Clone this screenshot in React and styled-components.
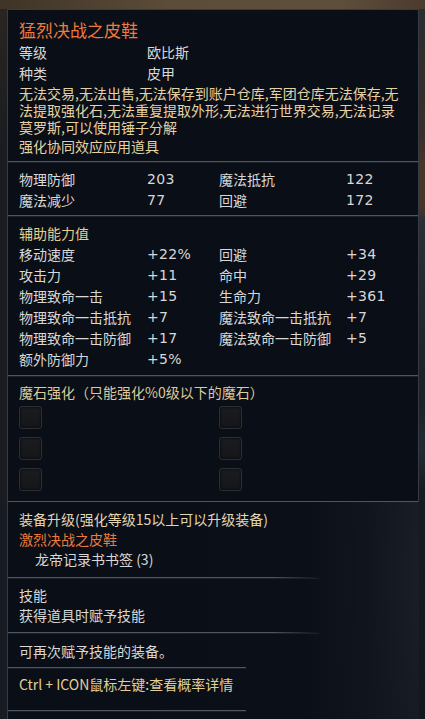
import styled, { createGlobalStyle } from 'styled-components'

const GlobalStyle = createGlobalStyle`
  html, body {
    margin: 0;
    padding: 0;
    background: #12161e;
  }
  body {
    font-family: 'Noto Sans CJK SC', 'Noto Sans', sans-serif;
  }
`

const BASE = [
  ['物理防御', '203', '魔法抵抗', '122'],
  ['魔法减少', '77', '回避', '172'],
]

const EXTRA = [
  ['移动速度', '+22%', '回避', '+34'],
  ['攻击力', '+11', '命中', '+29'],
  ['物理致命一击', '+15', '生命力', '+361'],
  ['物理致命一击抵抗', '+7', '魔法致命一击抵抗', '+7'],
  ['物理致命一击防御', '+17', '魔法致命一击防御', '+5'],
  ['额外防御力', '+5%', '', ''],
]

const Page = styled.div`
  min-height: 100vh;
  display: flex;
  flex-direction: column;
  background:
    radial-gradient(ellipse at 95% 80%, #1a1e26 0%, rgba(18,22,30,0) 45%),
    #12161e;
`

const TopBar = styled.div`
  height: 9px;
  background: linear-gradient(90deg, #3e3427 0%, #5c4c39 40%, #5f4e3b 80%, #4b3b2f 100%);
`

const Stage = styled.div`
  display: flex;
  flex: 1;
`

const LeftGutter = styled.div`
  width: 7px;
  background: linear-gradient(180deg, #2a2520 0%, #1a1c21 20%, #181b22 100%);
`

const RightGutter = styled.div`
  flex: 1;
  background: linear-gradient(180deg,
    #2c2b2e 0%, #3a2e2a 18%, #4a3329 22%, #4a3329 28%,
    #2a2e36 30%, #1b1f27 55%, #242a34 62%, #161a22 68%, #12161e 100%);
`

const Tooltip = styled.div`
  width: 412px;
  display: flex;
  flex-direction: column;
  color: #d8d8d8;
  font-size: 14px;
`

const Upper = styled.div`
  background: #0a0e17;
  border: 1px solid #363c46;
  border-bottom: none;
`

const Lower = styled.div`
  border-left: 1px solid #363c46;
  display: flex;
  flex-direction: column;
  flex: 1;
  background: linear-gradient(90deg, #0a0e17 0%, #0b0f18 72%, rgba(14,18,26,0.7) 88%, rgba(18,22,30,0) 100%);
`

const Section = styled.div`
  padding: ${p => p.$pad || '7px 11px 5px'};
  width: ${p => p.$width || 'auto'};
  box-sizing: border-box;
`

const Divider = styled.div`
  height: 1px;
  width: ${p => p.$width || '100%'};
  background: ${p => p.$fade
    ? 'linear-gradient(90deg, #4d5563 0%, #4d5563 85%, rgba(77,85,99,0) 100%)'
    : '#4d5563'};
  box-shadow: 0 1px 0 #1c2028;
`

const Title = styled.div`
  font-size: 17px;
  line-height: 24px;
  color: #f07a3a;
`

const Line = styled.div`
  line-height: ${p => p.$lh || 20}px;
  color: ${p => p.$color || '#d8d8d8'};
  padding-left: ${p => p.$indent || 0}px;
  white-space: nowrap;
`

const KeyRow = styled.div`
  display: grid;
  grid-template-columns: 128px 1fr;
  line-height: 21px;
`

const Desc = styled.div`
  margin-top: 1px;
  line-height: 17px;
  color: #e4d2a4;
`

const StatGrid = styled.div`
  display: grid;
  grid-template-columns: 128px 72px 127px 1fr;
  line-height: 21px;
  white-space: nowrap;
`

const Cell = styled.div`
  font-family: ${p => p.$num
    ? "'DejaVu Sans', 'Noto Sans CJK SC', sans-serif"
    : "'Noto Sans CJK SC', sans-serif"};
  letter-spacing: ${p => p.$num ? '0.3px' : '0'};
`

const SlotGrid = styled.div`
  margin-top: 3px;
  display: grid;
  grid-template-columns: 200px 23px;
  grid-auto-rows: 23px;
  row-gap: 8px;
`

const Slot = styled.div`
  width: 23px;
  height: 23px;
  box-sizing: border-box;
  border: 1px solid #2b2e33;
  border-radius: 3px;
  background: linear-gradient(180deg, #1a1c20 0%, #151619 100%);
  box-shadow: inset 0 0 3px rgba(0,0,0,0.8);
`

function Stats({ rows }) {
  return (
    <StatGrid>
      {rows.map((r, i) => r.map((c, j) => (
        <Cell key={i + '-' + j} $num={j % 2 === 1}>{c}</Cell>
      )))}
    </StatGrid>
  )
}

function App() {
  return (
    <Page>
      <GlobalStyle />
      <TopBar />
      <Stage>
        <LeftGutter />
        <Tooltip>
          <Upper>
            <Section $pad="8px 11px 5px">
              <Title>猛烈决战之皮鞋</Title>
              <KeyRow><span>等级</span><span>欧比斯</span></KeyRow>
              <KeyRow><span>种类</span><span>皮甲</span></KeyRow>
              <Desc>
                无法交易,无法出售,无法保存到账户仓库,军团仓库无法保存,无法提取强化石,无法重复提取外形,无法进行世界交易,无法记录莫罗斯,可以使用锤子分解
              </Desc>
              <Line $color="#e4d2a4">强化协同效应应用道具</Line>
            </Section>
            <Divider />
            <Section $pad="7px 11px 4px">
              <Stats rows={BASE} />
            </Section>
            <Divider />
            <Section $pad="7px 11px 5px">
              <Line $lh={21} $color="#e6cf8c">辅助能力值</Line>
              <Stats rows={EXTRA} />
            </Section>
            <Divider />
            <Section $pad="6px 11px 10px">
              <Line $lh={21} $color="#dccb9c">魔石强化（只能强化%0级以下的魔石）</Line>
              <SlotGrid>
                {Array.from({ length: 6 }).map((_, i) => <Slot key={i} />)}
              </SlotGrid>
            </Section>
            <Divider />
          </Upper>
          <Lower>
            <Section $pad="7px 11px 7px">
              <Line $color="#e2d5b4">装备升级(强化等级15以上可以升级装备)</Line>
              <Line $color="#ec7a3c">激烈决战之皮鞋</Line>
              <Line $lh={21} $indent={16}>龙帝记录书书签 (3)</Line>
            </Section>
            <Divider $width="311px" $fade />
            <Section $pad="7px 11px 7px">
              <Line>技能</Line>
              <Line>获得道具时赋予技能</Line>
            </Section>
            <Divider $width="311px" $fade />
            <Section $pad="8px 11px 6px">
              <Line>可再次赋予技能的装备。</Line>
            </Section>
            <Divider $width="238px" />
            <Section $pad="6px 11px 16px" $width="238px">
              <Line $color="#e2cf94">Ctrl + ICON鼠标左键:查看概率详情</Line>
            </Section>
            <Divider $width="238px" />
          </Lower>
        </Tooltip>
        <RightGutter />
      </Stage>
    </Page>
  )
}

export default App
